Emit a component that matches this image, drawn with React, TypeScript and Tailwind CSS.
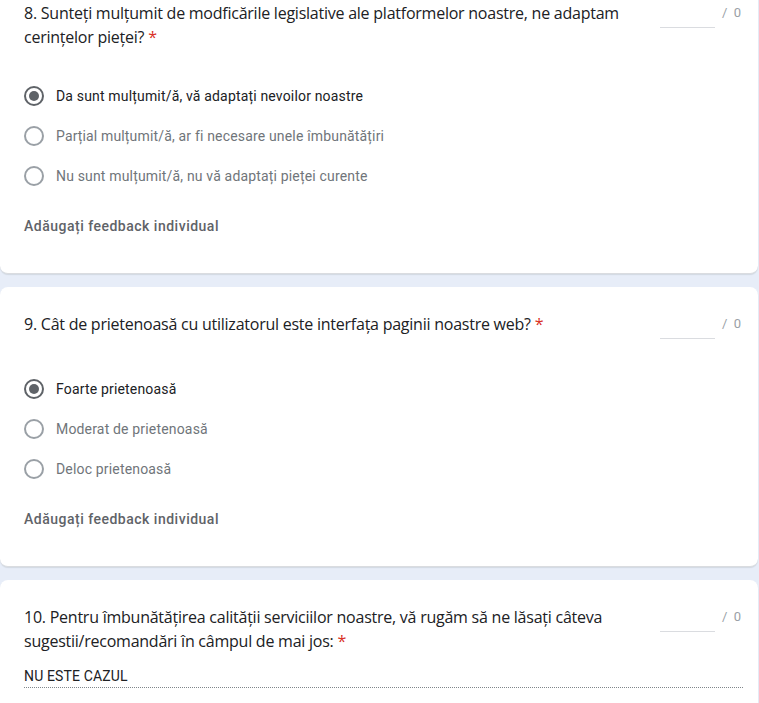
import React from "react";

const titleFont = { fontFamily: "'Open Sans', 'Noto Sans', sans-serif" };

function Radio({ checked }: { checked: boolean }) {
  return (
    <span
      className={
        "flex h-5 w-5 shrink-0 items-center justify-center rounded-full border-2 " +
        (checked ? "border-[#5f6368]" : "border-[#9aa0a6]")
      }
    >
      {checked && <span className="h-[10px] w-[10px] rounded-full bg-[#5f6368]" />}
    </span>
  );
}

function Points() {
  return (
    <div className="flex shrink-0 items-start gap-[7px] pt-[1px]">
      <div className="mt-[25px] h-px w-[55px] bg-[#dadce0]" />
      <span className="text-[13px] leading-[22px] text-[#9aa0a6]">/&nbsp;&nbsp;0</span>
    </div>
  );
}

function Title({ lines }: { lines: string[] }) {
  return (
    <div className="-mr-[7px] flex min-h-[30px] items-start justify-between">
      <div className="text-[16px] leading-6 tracking-[-0.24px] text-[#202124]" style={titleFont}>
        {lines.map((l, i) => (
          <div key={i} className="whitespace-nowrap">
            {l}
            {i === lines.length - 1 && <span className="text-[#d93025]"> *</span>}
          </div>
        ))}
      </div>
      <Points />
    </div>
  );
}

function Card({ children, first }: { children: React.ReactNode; first?: boolean }) {
  return (
    <div
      className={
        "rounded-lg border-b border-[#dadce0] bg-white px-6 pt-[25px] shadow-[0_1px_1px_rgba(60,64,67,0.12)] " +
        (first ? "-mt-[24px]" : "")
      }
    >
      {children}
    </div>
  );
}

function ChoiceCard({ first, lines, options, picked }: { first?: boolean; lines: string[]; options: string[]; picked: number }) {
  return (
    <Card first={first}>
      <Title lines={lines} />
      <div className="mt-[27px]">
        {options.map((o, i) => (
          <div key={o} className="flex h-10 items-center gap-3">
            <Radio checked={i === picked} />
            <span className={"text-sm tracking-[0.17px] " + (i === picked ? "text-[#202124]" : "text-[#70757a]")}>{o}</span>
          </div>
        ))}
      </div>
      <div className="mt-5 pb-[37px] text-sm font-medium leading-5 tracking-[0.5px] text-[#5f6368]">Adăugați feedback individual</div>
    </Card>
  );
}

export default function App() {
  return (
    <div
      className="min-h-[703px] overflow-hidden bg-[#e7edf8] pr-px"
      style={{ fontFamily: "Roboto, 'Liberation Sans', sans-serif" }}
    >
      <div className="flex flex-col gap-[13px]">
        <ChoiceCard
          first
          lines={["8. Sunteți mulțumit de modficările legislative ale platformelor noastre, ne adaptam", "cerințelor pieței?"]}
          options={[
            "Da sunt mulțumit/ă, vă adaptați nevoilor noastre",
            "Parțial mulțumit/ă, ar fi necesare unele îmbunătățiri",
            "Nu sunt mulțumit/ă, nu vă adaptați pieței curente",
          ]}
          picked={0}
        />
        <ChoiceCard
          lines={["9. Cât de prietenoasă cu utilizatorul este interfața paginii noastre web?"]}
          options={["Foarte prietenoasă", "Moderat de prietenoasă", "Deloc prietenoasă"]}
          picked={0}
        />
        <Card>
          <Title
            lines={[
              "10. Pentru îmbunătățirea calității serviciilor noastre, vă rugăm să ne lăsați câteva",
              "sugestii/recomandări în câmpul de mai jos:",
            ]}
          />
          <div className="mr-[-9px] mt-[13px] border-b border-dotted border-[#80868b] pb-px text-sm leading-5 tracking-[0.15px] text-[#202124]">
            NU ESTE CAZUL
          </div>
          <div className="h-10" />
        </Card>
      </div>
    </div>
  );
}
